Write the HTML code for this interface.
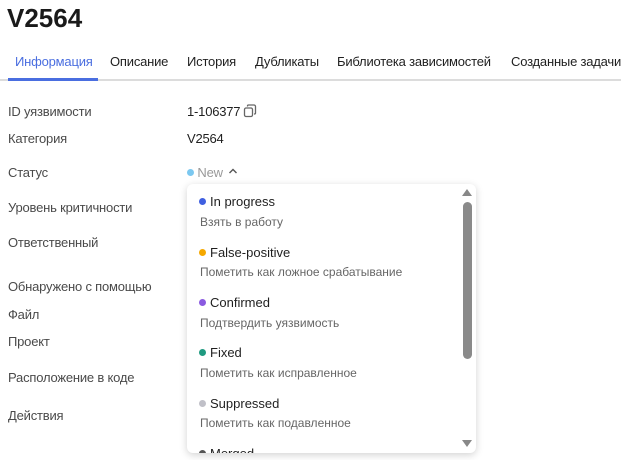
<!DOCTYPE html>
<html><head><meta charset="utf-8"><style>
*{margin:0;padding:0;box-sizing:border-box}
body{width:621px;height:460px;overflow:hidden;background:#fff;font-family:"Liberation Sans",sans-serif;color:#1f1f1f;position:relative}
.a{position:absolute;white-space:nowrap}
h1{position:absolute;left:7px;top:3px;font-size:26px;font-weight:bold;color:#1a1a1a}
.tab{position:absolute;top:54px;font-size:13px;color:#1f1f1f;white-space:nowrap;letter-spacing:-0.2px}
.lbl{position:absolute;left:8px;font-size:13px;color:#4a4a4a;letter-spacing:-0.2px}
.val{position:absolute;left:187px;font-size:13px;color:#1f1f1f;letter-spacing:-0.2px}
.dd{position:absolute;left:187px;top:184px;width:289px;height:269px;background:#fff;border-radius:6px;box-shadow:0 2px 8px rgba(0,0,0,.18);overflow:hidden}
.it{position:absolute;left:12px;font-size:13px;color:#1f1f1f;white-space:nowrap}
.it i{display:inline-block;width:7px;height:7px;border-radius:50%;margin-right:4px;vertical-align:1px}
.sub{position:absolute;left:13px;font-size:12px;color:#666;white-space:nowrap}
</style></head><body>
<h1>V2564</h1>
<div class="tab" style="left:15px;color:#4a6ee0">Информация</div>
<div class="tab" style="left:110px">Описание</div>
<div class="tab" style="left:187px">История</div>
<div class="tab" style="left:255px">Дубликаты</div>
<div class="tab" style="left:337px">Библиотека зависимостей</div>
<div class="tab" style="left:511px">Созданные задачи</div>
<div class="a" style="left:0;top:79px;width:621px;height:2px;background:#dcdcdc"></div>
<div class="a" style="left:8px;top:78px;width:90px;height:3px;background:#4a6ee0"></div>
<div class="lbl" style="top:104px">ID уязвимости</div>
<div class="val" style="top:104px">1-106377</div>
<svg class="a" style="left:243px;top:104px" width="14" height="14" viewBox="0 0 14 14" fill="none" stroke="#666" stroke-width="1.3"><rect x="1.5" y="4" width="8" height="8.5" rx="1.5"/><path d="M4.5 2.5V2a1 1 0 0 1 1-1h5.5a1.5 1.5 0 0 1 1.5 1.5V9a1 1 0 0 1-1 1h-.5"/></svg>
<div class="lbl" style="top:131px">Категория</div>
<div class="val" style="top:131px">V2564</div>
<div class="lbl" style="top:165px">Статус</div>
<div class="val" style="top:165px;color:#999"><span style="display:inline-block;width:7px;height:7px;border-radius:50%;background:#7cc8f0;vertical-align:1px"></span> New</div>
<svg class="a" style="left:228px;top:167px" width="10" height="8" viewBox="0 0 10 8" fill="none" stroke="#555" stroke-width="1.4"><path d="M1.5 6L5 2.5 8.5 6"/></svg>
<div class="lbl" style="top:200px">Уровень критичности</div>
<div class="lbl" style="top:235px">Ответственный</div>
<div class="lbl" style="top:279px">Обнаружено с помощью</div>
<div class="lbl" style="top:307px">Файл</div>
<div class="lbl" style="top:334px">Проект</div>
<div class="lbl" style="top:370px">Расположение в коде</div>
<div class="lbl" style="top:408px">Действия</div>
<div class="dd">
<div class="it" style="top:10px"><i style="background:#3f5fe0"></i>In progress</div>
<div class="sub" style="top:31px">Взять в работу</div>
<div class="it" style="top:61px"><i style="background:#f5a800"></i>False-positive</div>
<div class="sub" style="top:81px">Пометить как ложное срабатывание</div>
<div class="it" style="top:111px"><i style="background:#8a5ae0"></i>Confirmed</div>
<div class="sub" style="top:132px">Подтвердить уязвимость</div>
<div class="it" style="top:161px"><i style="background:#1f9a80"></i>Fixed</div>
<div class="sub" style="top:182px">Пометить как исправленное</div>
<div class="it" style="top:212px"><i style="background:#c0c0c8"></i>Suppressed</div>
<div class="sub" style="top:232px">Пометить как подавленное</div>
<div class="it" style="top:262px"><i style="background:#555"></i>Merged</div>
<div class="a" style="left:276px;top:18px;width:9px;height:157px;border-radius:5px;background:#8a8a8a"></div>
<div class="a" style="left:275px;top:5px;width:0;height:0;border-left:5px solid transparent;border-right:5px solid transparent;border-bottom:7px solid #888"></div>
<div class="a" style="left:275px;top:256px;width:0;height:0;border-left:5px solid transparent;border-right:5px solid transparent;border-top:7px solid #888"></div>
</div>
</body></html>
